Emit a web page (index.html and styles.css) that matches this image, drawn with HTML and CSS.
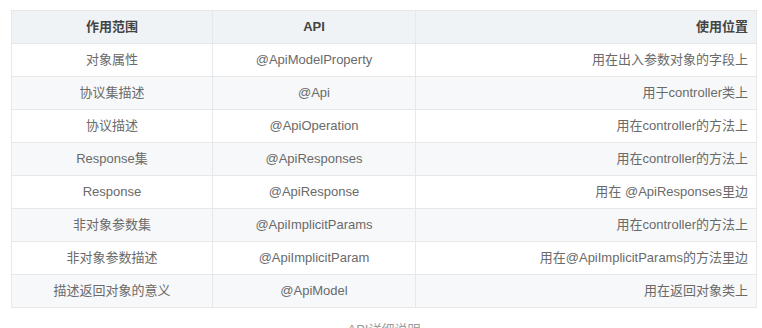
FILE: index.html
```html
<!DOCTYPE html>
<html lang="zh">
<head>
<meta charset="utf-8">
<link rel="stylesheet" href="styles.css">
</head>
<body>
<div class="page">
  <table class="api-table">
    <thead>
      <tr><th class="c">作用范围</th><th class="c">API</th><th class="r">使用位置</th></tr>
    </thead>
    <tbody>
      <tr><td class="c">对象属性</td><td class="c">@ApiModelProperty</td><td class="r">用在出入参数对象的字段上</td></tr>
      <tr><td class="c">协议集描述</td><td class="c">@Api</td><td class="r">用于controller类上</td></tr>
      <tr><td class="c">协议描述</td><td class="c">@ApiOperation</td><td class="r">用在controller的方法上</td></tr>
      <tr><td class="c">Response集</td><td class="c">@ApiResponses</td><td class="r">用在controller的方法上</td></tr>
      <tr><td class="c">Response</td><td class="c">@ApiResponse</td><td class="r">用在 @ApiResponses里边</td></tr>
      <tr><td class="c">非对象参数集</td><td class="c">@ApiImplicitParams</td><td class="r">用在controller的方法上</td></tr>
      <tr><td class="c">非对象参数描述</td><td class="c">@ApiImplicitParam</td><td class="r">用在@ApiImplicitParams的方法里边</td></tr>
      <tr><td class="c">描述返回对象的意义</td><td class="c">@ApiModel</td><td class="r">用在返回对象类上</td></tr>
    </tbody>
  </table>
  <div class="caption">API详细说明</div>
</div>
</body>
</html>
```
FILE: styles.css
```css
html, body {
  margin: 0;
  padding: 0;
  background: #fff;
}
.page {
  padding: 10px 0 0 11px;
  font-family: "Liberation Sans", "Noto Sans CJK SC", sans-serif;
  font-size: 13px;
  color: #6a6a6a;
}
.api-table {
  width: 746px;
  border-collapse: collapse;
  table-layout: fixed;
}
.api-table th,
.api-table td {
  height: 33px;
  padding: 0 8px;
  border: 1px solid #e6e8ea;
  box-sizing: border-box;
  line-height: 20px;
  white-space: nowrap;
}
.api-table th:nth-child(1) { width: 201px; }
.api-table th:nth-child(2) { width: 203px; }
.api-table thead th {
  background: #eff3f5;
  color: #444;
  font-weight: bold;
}
.api-table tbody tr:nth-child(even) td {
  background: #f7f8f9;
}
.c { text-align: center; }
.r { text-align: right; }
.caption {
  width: 746px;
  text-align: center;
  color: #999;
  margin-top: 12px;
  line-height: 20px;
}
```
